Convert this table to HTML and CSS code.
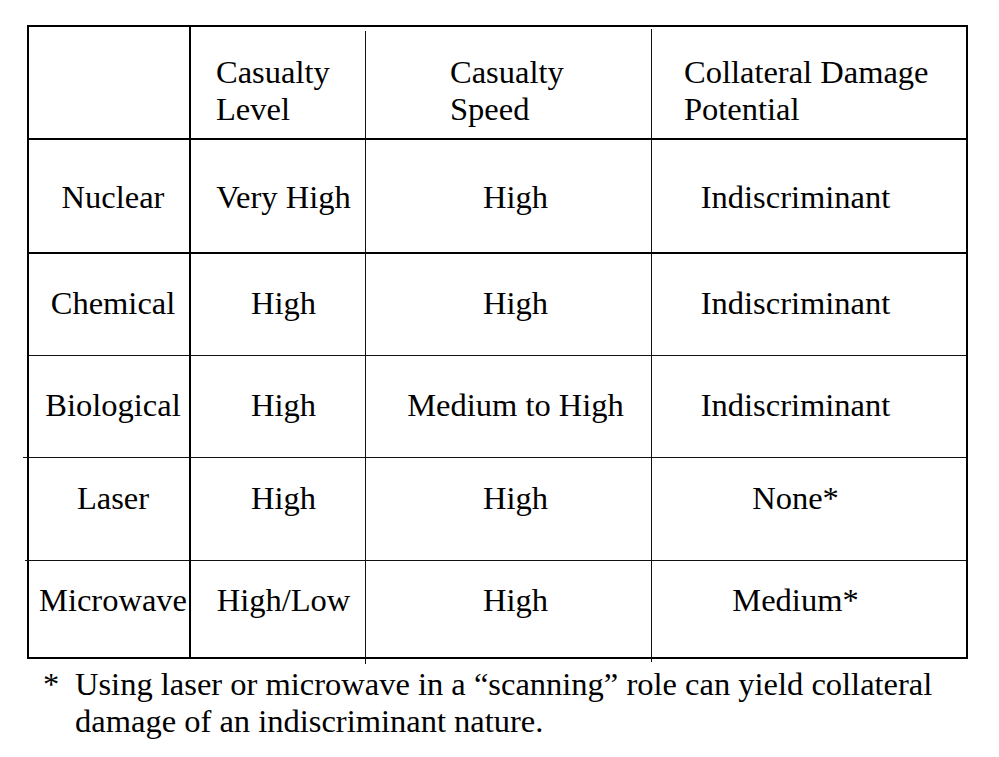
FILE: index.html
```html
<!DOCTYPE html>
<html lang="en">
<head>
<meta charset="utf-8">
<title>Weapon comparison</title>
<link rel="stylesheet" href="styles.css">
</head>
<body>
<div class="page">
  <div class="table">
    <div class="cell head c0"></div>
    <div class="cell head c1">Casualty<br>Level</div>
    <div class="cell head c2">Casualty<br>Speed</div>
    <div class="cell head c3">Collateral Damage<br>Potential</div>

    <div class="cell r1 c0">Nuclear</div>
    <div class="cell r1 c1">Very High</div>
    <div class="cell r1 c2">High</div>
    <div class="cell r1 c3">Indiscriminant</div>

    <div class="cell r2 c0">Chemical</div>
    <div class="cell r2 c1">High</div>
    <div class="cell r2 c2">High</div>
    <div class="cell r2 c3">Indiscriminant</div>

    <div class="cell r3 c0">Biological</div>
    <div class="cell r3 c1">High</div>
    <div class="cell r3 c2">Medium to High</div>
    <div class="cell r3 c3">Indiscriminant</div>

    <div class="cell r4 c0">Laser</div>
    <div class="cell r4 c1">High</div>
    <div class="cell r4 c2">High</div>
    <div class="cell r4 c3">None*</div>

    <div class="cell r5 c0">Microwave</div>
    <div class="cell r5 c1">High/Low</div>
    <div class="cell r5 c2">High</div>
    <div class="cell r5 c3">Medium*</div>
  </div>
  <div class="footnote">
    <span class="mark">*</span>
    <span class="note">Using laser or microwave in a “scanning” role can yield collateral damage of an indiscriminant nature.</span>
  </div>
</div>
</body>
</html>
```

FILE: styles.css
```css
html, body {
  margin: 0;
  background: #ffffff;
  font-family: "Liberation Serif", "Times New Roman", serif;
}

.page {
  padding: 25px 0 0 27px;
  font-family: "Liberation Serif", "Times New Roman", serif;
  font-size: 32.5px;
  line-height: 37px;
  color: #000000;
}

.table {
  display: grid;
  box-sizing: border-box;
  width: 941px;
  border: 2px solid #000;
  grid-template-columns: 162px 175px 286px 314px;
  grid-template-rows: 113px 114px 102px 102px 103px 96px;
}

.cell {
  position: relative;
  box-sizing: border-box;
  font-family: "Liberation Serif", "Times New Roman", serif;
  text-align: center;
  white-space: nowrap;
}

/* column dividers */
.c0 { border-right: 2px solid #000; padding-left: 8px; }
.c1 { border-right: 1px solid #111; padding-left: 11px; }
.c2 { border-right: 1px solid #111; padding-left: 14px; }
.c3 { padding-right: 27px; }

/* row dividers */
.head { border-bottom: 2px solid #000; padding-top: 27px; text-align: left; }
.r1 { border-bottom: 2px solid #000; padding-top: 39px; }
.r2 { border-bottom: 1px solid #111; padding-top: 31px; }
.r3 { border-bottom: 1px solid #111; padding-top: 31px; }
.r4 { border-bottom: 1px solid #111; padding-top: 22px; }
.r5 { padding-top: 21px; }

/* header cells: thin dividers stop short of the top border */
.head.c1, .head.c2 { border-right: 0; }
.head.c1 { padding-left: 25px; }
.head.c2 { padding-left: 84px; }
.head.c3 { padding-left: 32px; padding-right: 0; }

.head.c1::after,
.head.c2::after {
  content: "";
  position: absolute;
  right: 0;
  bottom: 0;
  width: 1px;
  background: #111;
}
.head.c1::after { top: 4px; }
.head.c2::after { top: 2px; }

/* thin dividers poke out below the table */
.r5.c1::after,
.r5.c2::after {
  content: "";
  position: absolute;
  right: -1px;
  top: 100%;
  width: 1px;
  background: #111;
}
.r5.c1::after { height: 7px; }
.r5.c2::after { height: 5px; }

/* row lines overhanging the left border */
.r3.c0::before,
.r4.c0::before {
  content: "";
  position: absolute;
  bottom: -1px;
  height: 1px;
  background: #111;
}
.r3.c0::before { left: -6px; width: 6px; }
.r4.c0::before { left: -4px; width: 4px; }

.footnote {
  display: grid;
  grid-template-columns: 32px 880px;
  margin: 7px 0 0 16px;
  font-family: "Liberation Serif", "Times New Roman", serif;
}

.mark {
  display: block;
}
```
